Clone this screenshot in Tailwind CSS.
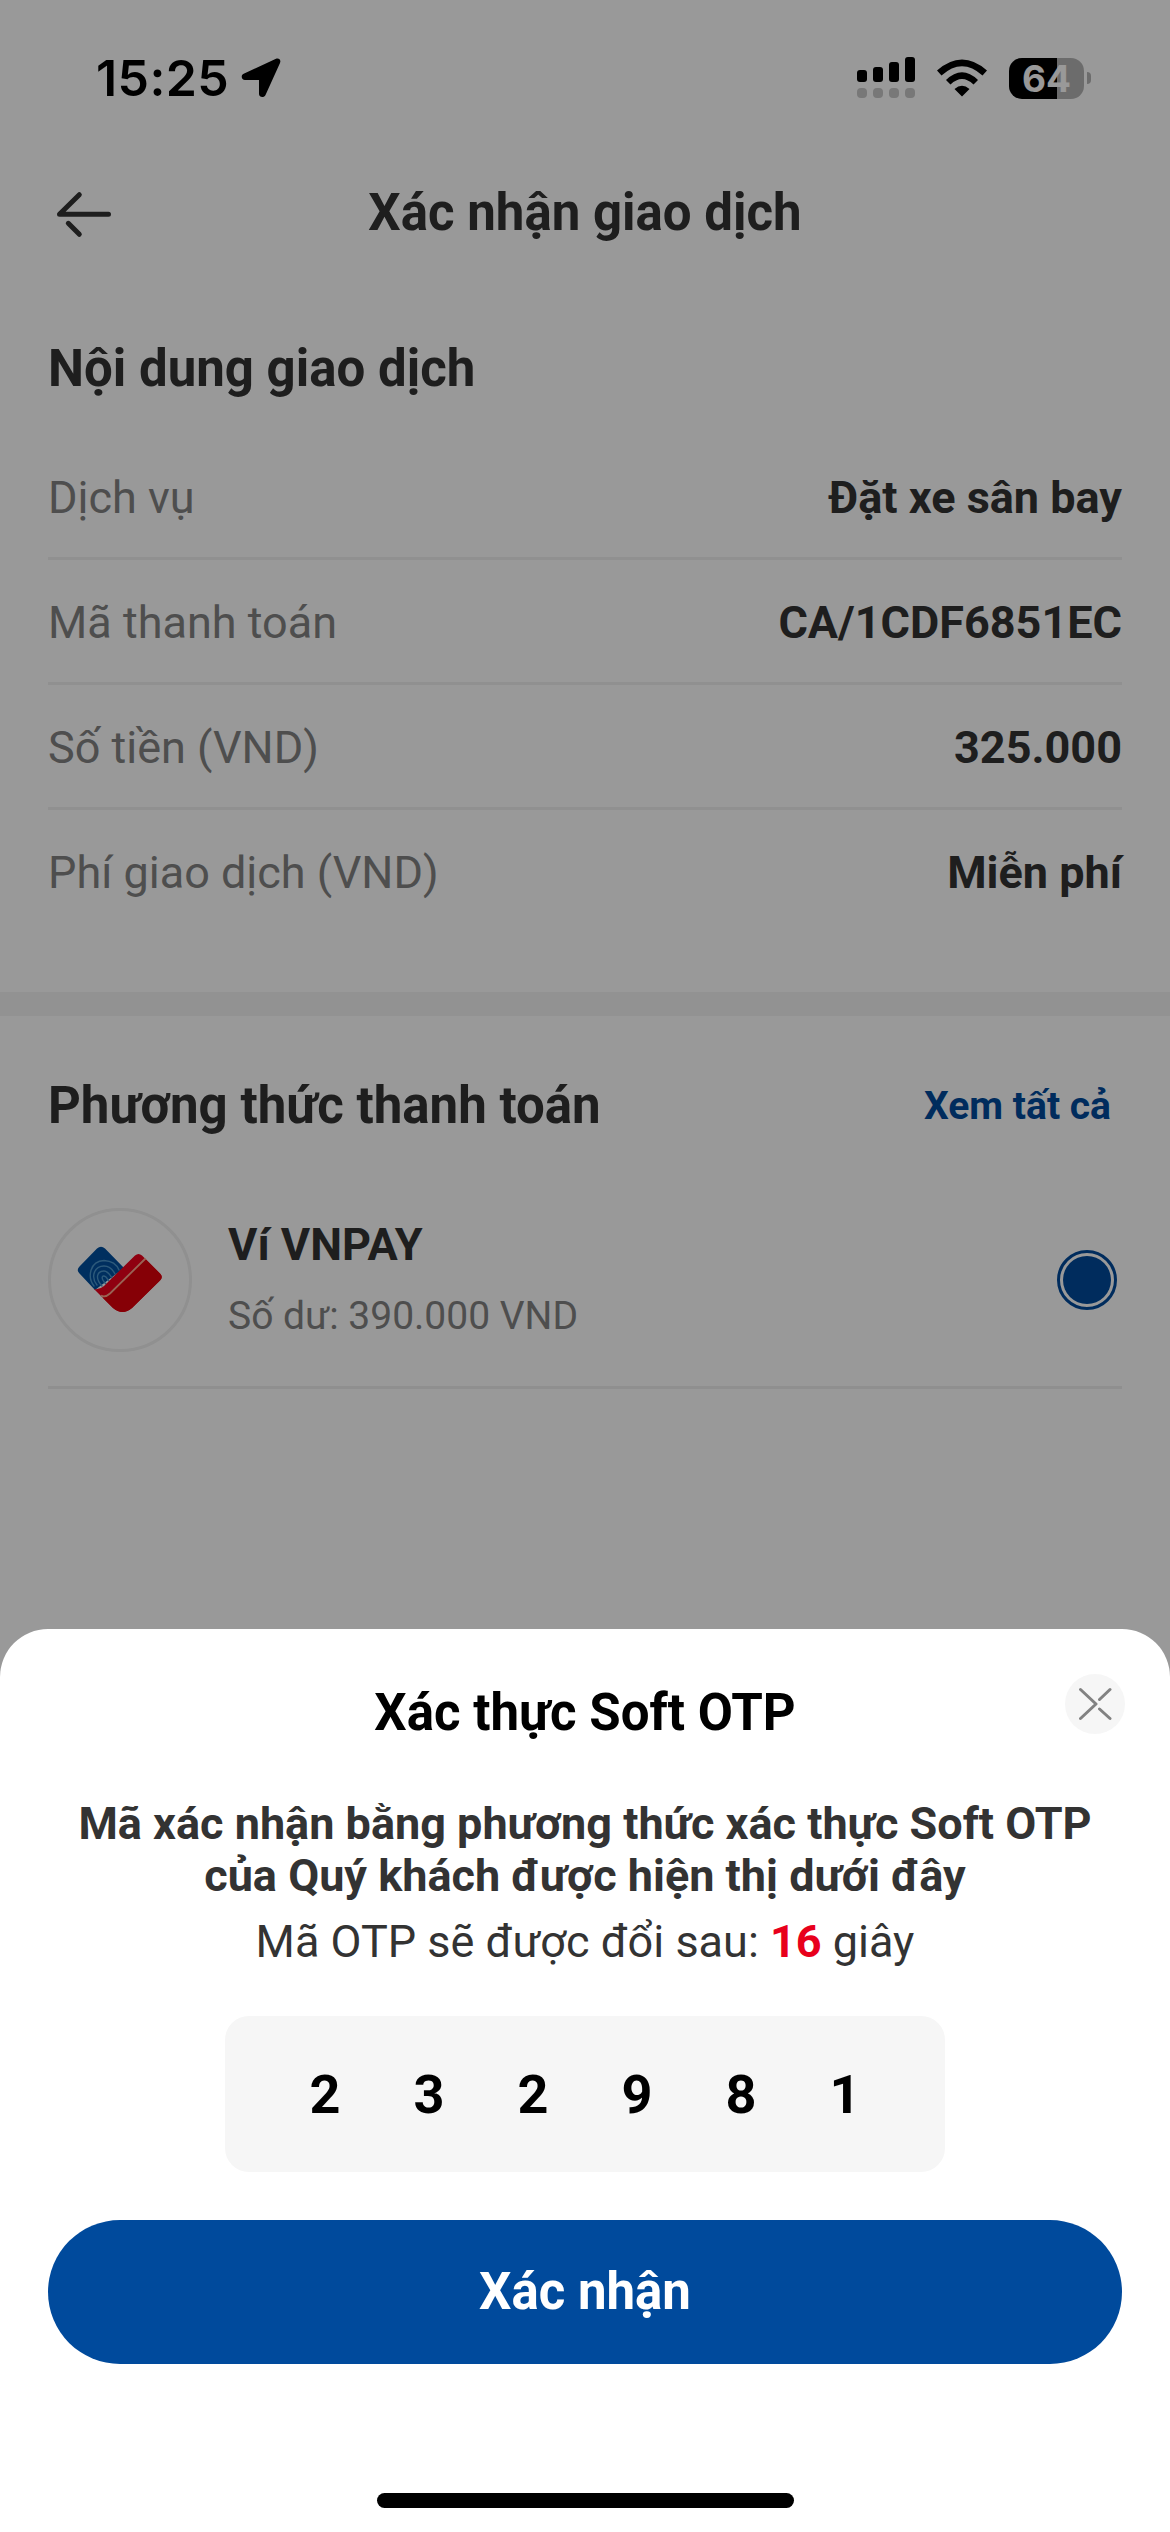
<!DOCTYPE html>
<html lang="vi">
<head>
<meta charset="utf-8">
<title>Xác nhận giao dịch</title>
<script src="https://cdn.jsdelivr.net/npm/@tailwindcss/browser@4"></script>
</head>
<body class="bg-white">
<div class="relative w-[1170px] h-[2532px] overflow-hidden bg-white font-[Roboto,sans-serif] text-[#333]">
  <header class="flex h-[156px] items-start justify-between pl-[96px] pr-[79px]">
    <div class="flex items-center pt-[48px] text-black">
      <span class="font-['Inter',sans-serif] text-[50px] leading-[60px] font-semibold tracking-[0.4px]">15:25</span>
      <svg class="ml-[12px] h-[40px] w-[40px]" viewBox="0 0 40 40"><path d="M35 0.8C38 -0.3 40.3 2 39 5L24.500 37c-1.500 3.200-6.500 2.400-6.500-1V22H4C0.500 22 -0.600 17.200 2.700 15.700Z"/></svg>
    </div>
    <div class="flex items-center gap-[22px] pt-[57px]">
      <svg class="h-[42px] w-[58px]" viewBox="0 0 58 42"><rect y="13" width="10" height="12" rx="3"/><rect x="16" y="10" width="10" height="15" rx="3"/><rect x="32" y="5" width="10" height="20" rx="3"/><rect x="48" y="0" width="10" height="25" rx="3"/><g fill="#c8c8c8"><rect y="31" width="10" height="10" rx="4"/><rect x="16" y="31" width="10" height="10" rx="4"/><rect x="32" y="31" width="10" height="10" rx="4"/><rect x="48" y="31" width="10" height="10" rx="4"/></g></svg>
      <svg class="h-[38px] w-[50px]" viewBox="0 0 50 38"><path d="M0 11.500Q25-10.500 50 11.500L45.500 16.500Q25-2 4.500 16.500ZM9 21Q25 5.500 41 21L36.500 25.500Q25 14.500 13.500 25.500ZM17.500 30Q25 23.500 32.500 30L25 37.500Z"/></svg>
      <div class="flex items-center gap-[3px]">
        <div class="flex h-[41px] w-[75px] items-center justify-center rounded-[13px] bg-[linear-gradient(90deg,#000_64%,#b5b5b5_64%)] font-['Inter',sans-serif] text-[37px] leading-none font-bold text-white">64</div>
        <div class="h-[12px] w-[4px] rounded-r-full bg-[#b5b5b5]"></div>
      </div>
    </div>
  </header>
  <nav class="grid h-[114px] grid-cols-[1fr_auto_1fr] items-center px-[57px]">
    <svg class="h-[50px] w-[55px]" viewBox="0 -2 55 50" fill="none" stroke="#333" stroke-width="5" stroke-linecap="round" stroke-linejoin="round"><path d="M51.500 24.300H2.500L22.300 4.700M11.300 33.300L22.300 44.300"/></svg>
    <h1 class="text-[51px] leading-[60px] font-bold">Xác nhận giao dịch</h1>
  </nav>
  <section class="px-[48px] pt-[69px]">
    <h2 class="text-[51px] leading-[60px] font-bold">Nội dung giao dịch</h2>
    <dl class="pt-[36px] text-[45px]">
      <div class="flex h-[125px] items-center justify-between border-b-3 border-[#f1f1f1] pt-[3px]"><dt class="text-[#828282]">Dịch vụ</dt><dd class="font-bold">Đặt xe sân bay</dd></div>
      <div class="flex h-[125px] items-center justify-between border-b-3 border-[#f1f1f1] pt-[3px]"><dt class="text-[#828282]">Mã thanh toán</dt><dd class="font-bold">CA/1CDF6851EC</dd></div>
      <div class="flex h-[125px] items-center justify-between border-b-3 border-[#f1f1f1] pt-[3px]"><dt class="text-[#828282]">Số tiền (VND)</dt><dd class="font-bold">325.000</dd></div>
      <div class="flex h-[125px] items-center justify-between"><dt class="text-[#828282]">Phí giao dịch (VND)</dt><dd class="font-bold">Miễn phí</dd></div>
    </dl>
  </section>
  <div class="mt-[57px] h-[24px] bg-[#f4f4f4]"></div>
  <section class="px-[48px] pt-[60px]">
    <div class="flex items-center justify-between pr-[11px]">
      <h2 class="text-[51px] leading-[60px] font-bold">Phương thức thanh toán</h2>
      <a class="text-[39px] font-bold text-[#004a9c]">Xem tất cả</a>
    </div>
    <div class="mt-[23px] flex h-[230px] items-center border-b-3 border-[#efefef] pt-[15px] pr-[5px]">
      <div class="flex size-[144px] items-center justify-center rounded-full border-3 border-[#f0f0f0]">
        <svg class="h-[68px] w-[86px]" viewBox="0 0 86 68">
          <path d="M20 2.500Q24-1 28 2.500L47 22L18 44L2.500 27.500Q-1 24 2.500 20.500Z" fill="#004f9e"/>
          <g fill="none" stroke="#4a94cc" stroke-width="1.400" stroke-linecap="round"><path d="M17 40C10 31 13 15 27 14.500C35 15 40 19 42 24M20 39C13 30 18 20 27 20C33 20 36 24 38 28M25 40C17 31 21 25 27 25C31 25 33 29 35 32M29 38C23 32 25 28 29 31L32 35"/></g>
          <path d="M58 9.500Q61.500 6.500 65 9.500L83 27.500Q86.500 31 83 34.500L55 62Q45.500 70 36 62L17 43Q22.500 44 27 40Z" fill="#ee001c"/>
          <path d="M69 13.500L83 27.500Q86.500 31 83 34.500L55 62Q45.500 70 36 62L26 52Q29 52 33 48Z" fill="#df000a"/>
          <path d="M24 49.500Q28 52 33 47.500L68.500 12.500" fill="none" stroke="#ffa58c" stroke-width="1.800"/>
        </svg>
      </div>
      <div class="ml-[36px] flex-1 pb-[2px]">
        <h3 class="text-[45px] leading-[54px] font-bold">Ví VNPAY</h3>
        <p class="mt-[20px] text-[39px] leading-[48px] text-[#828282]">Số dư: 390.000 VND</p>
      </div>
      <div class="flex size-[60px] items-center justify-center rounded-full border-3 border-[#004a9c]"><div class="size-[48px] rounded-full bg-[#004a9c]"></div></div>
    </div>
  </section>
  <div class="absolute inset-0 bg-black/40"></div>
  <section class="absolute inset-x-0 bottom-0 flex h-[903px] flex-col items-center rounded-t-[48px] bg-white px-[48px]">
    <h2 class="mt-[54px] text-[51px] leading-[60px] font-bold text-black">Xác thực Soft OTP</h2>
    <button class="absolute top-[45px] right-[45px] flex size-[60px] items-center justify-center rounded-full bg-[#f6f6f6]"><svg class="size-[34px]" viewBox="0 0 34 34" fill="none" stroke="#828282" stroke-width="3" stroke-linecap="round" stroke-linejoin="round"><path d="M2.500 2.500L18 17L2.500 31.500M32 2.500L21.500 12.500M21.500 22L32 31.500"/></svg></button>
    <p class="mt-[55px] text-center text-[45px] leading-[52px] font-bold">Mã xác nhận bằng phương thức xác thực Soft OTP<br>của Quý khách được hiện thị dưới đây</p>
    <p class="mt-[13px] text-[45px] leading-[54px]">Mã OTP sẽ được đổi sau: <span class="font-bold text-[#e8001c]">16</span> giây</p>
    <div class="mt-[47px] grid h-[156px] w-[720px] grid-cols-6 items-center rounded-[24px] bg-[#f6f6f6] px-[48px] text-center text-[54px] font-bold text-black"><span>2</span><span>3</span><span>2</span><span>9</span><span>8</span><span>1</span></div>
    <button class="mt-[48px] h-[144px] w-full rounded-full bg-[#004a9c] text-[51px] font-bold text-white">Xác nhận</button>
    <div class="mt-auto mb-[24px] h-[15px] w-[417px] rounded-full bg-black"></div>
  </section>
</div>
</body>
</html>
